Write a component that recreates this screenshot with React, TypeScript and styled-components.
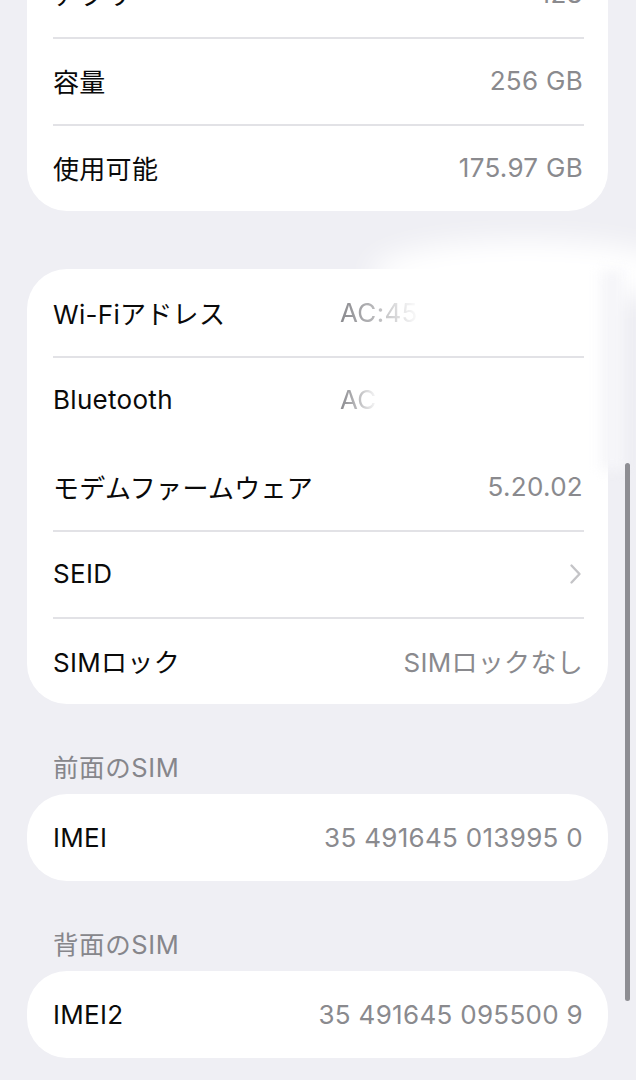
import styled, { createGlobalStyle } from "styled-components";

// ----------------------------------------------
//  global
// ----------------------------------------------
const GlobalStyle = createGlobalStyle`
  html, body {
    margin: 0;
    padding: 0;
    background: #efeff4;
    overflow: hidden;
  }
  body {
    font-family: "Inter", "Noto Sans CJK JP", sans-serif;
    -webkit-font-smoothing: antialiased;
  }
`;

// ----------------------------------------------
//  styled components
// ----------------------------------------------
const Page = styled.div`
  position: relative;
  width: 636px;
  height: 1080px;
  overflow: hidden;
  background: #efeff4;
  padding: 0 28px 0 27px;
  box-sizing: border-box;
`;

const Card = styled.div<{ $first?: boolean }>`
  background: #ffffff;
  border-radius: 40px;
  overflow: hidden;
  margin-top: ${(p) => (p.$first ? "-50px" : "0")};
  ${(p) => p.$first && "border-top-left-radius: 0; border-top-right-radius: 0;"}
`;

const Gap = styled.div`
  height: 58px;
`;

const SectionHeader = styled.div`
  padding: 50px 0 12px 26px;
  font-size: 25.5px;
  line-height: 28px;
  color: #86868b;
  letter-spacing: 0.6px;
`;

const Row = styled.div<{ $faded?: boolean }>`
  position: relative;
  height: 87px;
  padding: 0 25px 0 26px;
  display: ${(p) => (p.$faded ? "grid" : "flex")};
  grid-template-columns: 287px 1fr;
  align-items: center;
  justify-content: space-between;
  font-size: 26px;
  letter-spacing: 0.3px;

  & + &::before {
    content: "";
    position: absolute;
    top: 0;
    left: 26px;
    right: 24px;
    height: 1.5px;
    background: #e2e2e6;
  }
`;

const Label = styled.span`
  color: #0a0a0a;
  white-space: nowrap;
`;

const Value = styled.span`
  color: #8a8a8e;
  white-space: nowrap;
`;

const FadedValue = styled.span<{ $fade: number }>`
  color: #8a8a8e;
  white-space: nowrap;
  -webkit-mask-image: linear-gradient(
    to right,
    #000 0,
    rgba(0, 0, 0, 0.5) ${(p) => p.$fade * 0.55}px,
    transparent ${(p) => p.$fade}px
  );
  mask-image: linear-gradient(
    to right,
    #000 0,
    rgba(0, 0, 0, 0.5) ${(p) => p.$fade * 0.55}px,
    transparent ${(p) => p.$fade}px
  );
`;

const Chevron = styled.svg`
  width: 13px;
  height: 22px;
  margin-right: 1px;
`;

const Smear = styled.div`
  position: absolute;
  top: 240px;
  left: 370px;
  width: 310px;
  height: 66px;
  border-radius: 50%;
  background: #ffffff;
  filter: blur(14px);
  pointer-events: none;
`;

const EdgeSmear = styled.div`
  position: absolute;
  top: 270px;
  left: 600px;
  width: 24px;
  height: 200px;
  background: #f6f6f9;
  filter: blur(6px);
  pointer-events: none;
`;

const ScrollBar = styled.div`
  position: absolute;
  top: 463px;
  left: 625px;
  width: 5px;
  height: 538px;
  border-radius: 3px;
  background: #8e8e93;
`;

// ----------------------------------------------
//  data
// ----------------------------------------------
const storage = [
  { label: "アプリ", value: "128" },
  { label: "容量", value: "256 GB" },
  { label: "使用可能", value: "175.97 GB" },
];

// ----------------------------------------------
//  function App()
// ----------------------------------------------
export default function App() {
  return (
    <>
      <GlobalStyle />
      <Page>
        <Card $first>
          {storage.map((r) => (
            <Row key={r.label}>
              <Label>{r.label}</Label>
              <Value>{r.value}</Value>
            </Row>
          ))}
        </Card>

        <Gap />

        <Card>
          <Row $faded>
            <Label>Wi-Fiアドレス</Label>
            <FadedValue $fade={80}>AC:45:8F</FadedValue>
          </Row>
          <Row $faded>
            <Label>Bluetooth</Label>
            <FadedValue $fade={38}>AC:45</FadedValue>
          </Row>
          <Row>
            <Label>モデムファームウェア</Label>
            <Value>5.20.02</Value>
          </Row>
          <Row>
            <Label>SEID</Label>
            <Chevron viewBox="0 0 13 22" fill="none">
              <path
                d="M2.5 2.5l8 8.5-8 8.5"
                stroke="#c4c4c7"
                strokeWidth="2.4"
                strokeLinecap="round"
                strokeLinejoin="round"
              />
            </Chevron>
          </Row>
          <Row>
            <Label>SIMロック</Label>
            <Value>SIMロックなし</Value>
          </Row>
        </Card>

        <SectionHeader>前面のSIM</SectionHeader>
        <Card>
          <Row>
            <Label>IMEI</Label>
            <Value>35 491645 013995 0</Value>
          </Row>
        </Card>

        <SectionHeader>背面のSIM</SectionHeader>
        <Card>
          <Row>
            <Label>IMEI2</Label>
            <Value>35 491645 095500 9</Value>
          </Row>
        </Card>

        <Smear />
        <EdgeSmear />
        <ScrollBar />
      </Page>
    </>
  );
}
